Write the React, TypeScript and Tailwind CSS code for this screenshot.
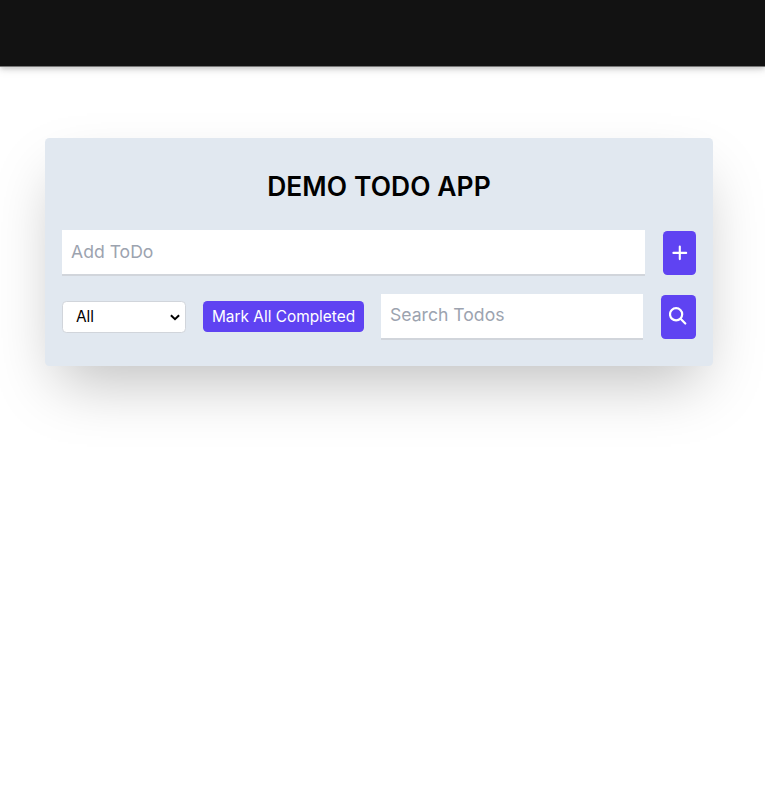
import React from "react";

function PlusIcon() {
  return (
    <svg width="18" height="18" viewBox="0 0 18 18" fill="none" stroke="currentColor" strokeWidth="2.1" strokeLinecap="round">
      <path d="M8.8 2.5v12.6M2.4 8.9h12.8" />
    </svg>
  );
}

function SearchIcon() {
  return (
    <svg width="20" height="20" viewBox="0 0 20 20" fill="none" stroke="currentColor" strokeWidth="2.2" strokeLinecap="round">
      <circle cx="7.1" cy="7.3" r="6.1" />
      <path d="M11.6 11.8l4.7 4.7" />
    </svg>
  );
}

function ChevronIcon() {
  return (
    <svg
      className="pointer-events-none absolute top-[13px] right-[6px]"
      width="10"
      height="7"
      viewBox="0 0 10 7"
      fill="none"
      stroke="currentColor"
      strokeWidth="2"
    >
      <path d="M0.9 1.2L5 5.1l4.1-3.9" />
    </svg>
  );
}

const field =
  "h-[46px] min-w-0 rounded-none border-b-2 border-[#d1d5db] bg-white px-[9px] text-[17.6px] text-black outline-none placeholder:text-[#9ca3af]";
const action = "flex h-[44px] items-center justify-center rounded-[4.4px] bg-[#5f43f2] text-white";

export default function App() {
  return (
    <div className="min-h-screen bg-white font-['Inter','Liberation_Sans',sans-serif] text-black">
      <header className="h-[67px] border-b border-[#777777] bg-[#121212] shadow-[0_2px_4px_-1px_rgba(0,0,0,0.08),0_3px_5px_rgba(0,0,0,0.08),0_2px_10px_rgba(0,0,0,0.1)]" />
      <main className="pt-[71px] pr-[52px] pl-[45px]">
        <section className="h-[228px] rounded-[4.4px] bg-[#e1e8f0] px-[17px] pt-[29px] shadow-[0_28px_58px_-13px_rgba(0,0,0,0.26)]">
          <h1 className="h-[63px] text-center text-[26.4px] leading-[39px] font-semibold tracking-[0.1px]">DEMO TODO APP</h1>
          <form className="flex items-center gap-[18px]" onSubmit={(e) => e.preventDefault()}>
            <input className={`${field} flex-1 pb-px`} placeholder="Add ToDo" />
            <button className={`${action} w-[33px]`} aria-label="Add">
              <PlusIcon />
            </button>
          </form>
          <div className="mt-[18px] flex items-center">
            <div className="relative h-[32px] w-[124px]">
              <select className="h-full w-full appearance-none rounded-[4.4px] border border-[#d1d5db] bg-white pl-[13px] text-[15.4px]">
                <option>All</option>
                <option>Completed</option>
                <option>Active</option>
              </select>
              <ChevronIcon />
            </div>
            <button className="mb-[2px] ml-[17px] h-[31px] w-[161px] rounded-[4.4px] bg-[#5f43f2] pt-px text-[15.4px] whitespace-nowrap text-white">
              Mark All Completed
            </button>
            <input className={`${field} ml-[17px] flex-1 pb-[3px]`} placeholder="Search Todos" />
            <button className={`${action} ml-[18px] w-[35px] pb-px`} aria-label="Search">
              <SearchIcon />
            </button>
          </div>
        </section>
      </main>
    </div>
  );
}
